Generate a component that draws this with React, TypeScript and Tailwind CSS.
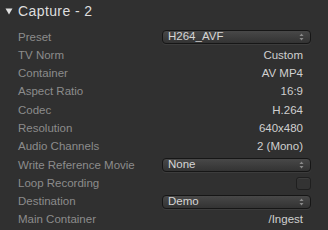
type Row =
  | { label: string; kind: "text"; value: string }
  | { label: string; kind: "select"; value: string }
  | { label: string; kind: "check" };

const rows: Row[] = [
  { label: "Preset", kind: "select", value: "H264_AVF" },
  { label: "TV Norm", kind: "text", value: "Custom" },
  { label: "Container", kind: "text", value: "AV MP4" },
  { label: "Aspect Ratio", kind: "text", value: "16:9" },
  { label: "Codec", kind: "text", value: "H.264" },
  { label: "Resolution", kind: "text", value: "640x480" },
  { label: "Audio Channels", kind: "text", value: "2 (Mono)" },
  { label: "Write Reference Movie", kind: "select", value: "None" },
  { label: "Loop Recording", kind: "check" },
  { label: "Destination", kind: "select", value: "Demo" },
  { label: "Main Container", kind: "text", value: "/Ingest" },
];

function Arrows() {
  return (
    <svg width="5" height="8" viewBox="0 0 5 8" className="shrink-0">
      <path d="M2.5 0.5 L4.5 3 L0.5 3 Z" fill="#8a8a8a" />
      <path d="M2.5 7.5 L4.5 5 L0.5 5 Z" fill="#8a8a8a" />
    </svg>
  );
}

function Select({ value }: { value: string }) {
  return (
    <div className="ml-auto flex h-[14px] w-[149px] items-center justify-between rounded-[4px] border border-[#161616] bg-gradient-to-b from-[#484848] to-[#333333] pl-[5px] pr-[6px] text-[#d6d6d6] shadow-[0_1px_0_#3c3c3c]">
      <span className="leading-none">{value}</span>
      <Arrows />
    </div>
  );
}

export default function App() {
  return (
    <div
      className="h-[230px] w-[328px] overflow-hidden bg-[#303030] text-[11.5px]"
      style={{ fontFamily: '"Liberation Sans", Arial, sans-serif' }}
    >
      <div className="flex h-[21px] items-center pl-[5px] pt-[1px]">
        <svg width="8" height="7" viewBox="0 0 8 7" className="mr-[5px]">
          <path d="M0.5 0.5 L7.5 0.5 L4 6.5 Z" fill="#e0e0e0" />
        </svg>
        <span className="text-[14px] tracking-[0.4px] text-[#dedede]">Capture - 2</span>
      </div>
      <div className="flex flex-col pt-[7px]">
        {rows.map((r) => (
          <div key={r.label} className="flex h-[18.3px] items-center pl-[18px] pr-[17px]">
            <span className="text-[#8c8c8c]">{r.label}</span>
            {r.kind === "select" && <Select value={r.value} />}
            {r.kind === "text" && (
              <span className="ml-auto pr-[8px] text-[#cfcfcf]">{r.value}</span>
            )}
            {r.kind === "check" && (
              <div className="ml-auto h-[13px] w-[15px] rounded-[3px] border border-[#1f1f1f] bg-[#333333] shadow-[inset_0_1px_0_#3e3e3e]" />
            )}
          </div>
        ))}
      </div>
    </div>
  );
}
